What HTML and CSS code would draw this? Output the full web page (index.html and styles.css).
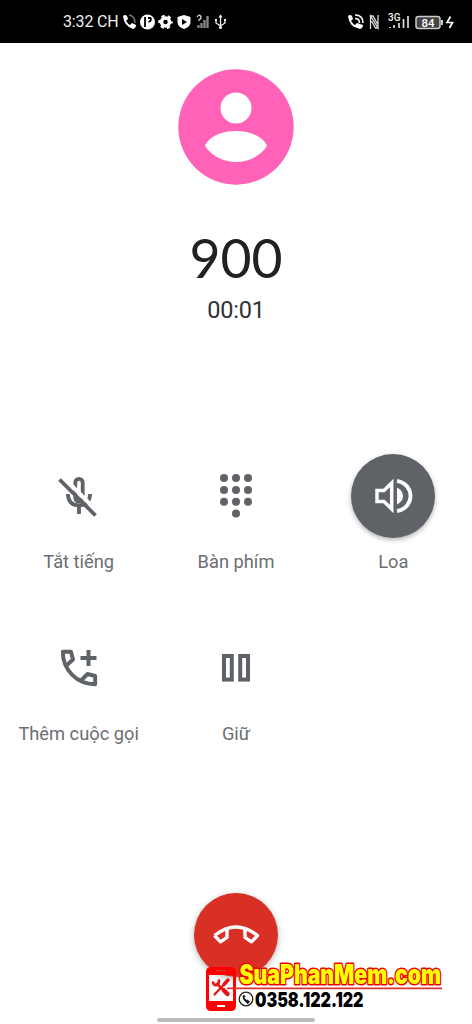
FILE: index.html
```html
<!DOCTYPE html>
<html lang="vi">
<head>
<meta charset="utf-8">
<title>900</title>
<link rel="stylesheet" href="styles.css">
</head>
<body>
<div class="screen">
  <header class="status">
    <div class="status-left">
      <span class="clock">3:32 CH</span>
      <svg class="status-icons" width="110" height="20" viewBox="0 0 110 20">
        <path d="M1 4q2-2 4 0l1 3-2 2q2 3 4 4l2-2 4 2q0 3-3 4Q2 14 1 4Z" fill="#fff"/>
        <path d="M7 3q6 1 6 8" fill="none" stroke="#777" stroke-width="1.3"/>
        <circle cx="25.500" cy="10" r="7.500" fill="#fff"/>
        <path d="M23 5v10M26 6h2.500q1.500 2.500-2 4" fill="none" stroke="#000" stroke-width="1.800"/>
        <circle cx="43.500" cy="10" r="4" fill="none" stroke="#fff" stroke-width="3.500"/>
        <circle cx="43.500" cy="10" r="6" fill="none" stroke="#fff" stroke-width="2.400" stroke-dasharray="3.140 3.140" stroke-dashoffset="1.570"/>
        <path d="M62 3l6.500 2v5q0 5-6.500 7-6.500-2-6.500-7V5Z" fill="#fff"/>
        <path d="M60 7l5 3-5 3Z" fill="#000"/>
        <path d="M76.500 16v-3M79.500 16v-5M82.500 16V8M85.500 16V4" stroke="#888" stroke-width="2.300"/>
        <path d="M75 5q2-3 3.500-1t-1.500 4v1" fill="none" stroke="#ddd" stroke-width="1.300"/>
        <path d="M98.500 3v13M94 8v3l4.500 3 4.500-3V8" fill="none" stroke="#eee" stroke-width="1.300"/>
        <path d="M96.500 5.500l2-3 2 3Z" fill="#eee"/>
        <circle cx="98.500" cy="15.500" r="1.600" fill="#eee"/>
        <path d="M93 7h2v2h-2ZM102 7h2v2h-2Z" fill="#eee"/>
      </svg>
    </div>
    <svg class="status-icons" width="110" height="20" viewBox="0 0 110 20">
      <path d="M0 4q2-2 4 0l1 3-2 2q2 3 4 4l2-2 6 2q0 3-3 4Q1 15 0 4Z" fill="#fff"/>
      <path d="M7 3q8 0 8 8M7 6.500q4.500 0 4.500 4.500" fill="none" stroke="#fff" stroke-width="1.600"/>
      <path d="M22.500 17V4l7.500 12V3M22.500 4l2.500 0 4.500 8M30 16h-2.500l-4-7" fill="none" stroke="#ddd" stroke-width="1.300"/>
      <text class="net" x="40" y="9">3G</text>
      <path d="M42 16v-1M46 16v-3M51 16v-5M55.500 16V7M60 16V4" stroke="#ddd" stroke-width="1.700"/>
      <rect x="68" y="4.500" width="24" height="12" rx="2.500" fill="#444" stroke="#ccc" stroke-width="1.500"/>
      <path d="M94 8v5" stroke="#ccc" stroke-width="2"/>
      <text class="battery" x="73.500" y="14.500">84</text>
      <path d="M102.500 4.500l-3.500 6h5.500l-3 5.500" fill="none" stroke="#fff" stroke-width="1.700"/>
    </svg>
  </header>

  <section class="caller">
    <svg class="avatar" width="116" height="116" viewBox="0 0 116 116">
      <circle cx="58" cy="58" r="57.700" fill="#ff62b7"/>
      <circle cx="58" cy="39" r="15.500" fill="#fff"/>
      <path d="M28 74.500C35 65 47 62 58 62s23 3 30 12.500q1.500 2 0 4C81 88 69 93 58 93S35 88 28 78.500q-1.500-2 0-4Z" fill="#fff"/>
    </svg>
    <h1 class="number">900</h1>
    <p class="timer">00:01</p>
  </section>

  <section class="actions">
    <div class="action">
      <div class="knob">
        <svg width="48" height="48" viewBox="0 0 48 48">
          <g fill="none" stroke="#5f6368" stroke-width="3.800">
            <path d="M20.300 26V10.500a3.700 3.700 0 0 1 7.400 0V26a3.700 3.700 0 0 1-7.400 0Z"/>
            <path d="M12.800 22q.7 11.500 11.200 11.500T35.200 22M24 33v9"/>
            <path d="M8 5l36 36" stroke="#fff" stroke-width="4"/>
            <path d="M4.500 7.500l36 36"/>
          </g>
        </svg>
      </div>
      <span class="label">Tắt tiếng</span>
    </div>
    <div class="action">
      <div class="knob">
        <svg width="48" height="48" viewBox="0 0 48 48" fill="#5f6368">
          <circle cx="12" cy="6" r="4"/><circle cx="24" cy="6" r="4"/><circle cx="36" cy="6" r="4"/>
          <circle cx="12" cy="18" r="4"/><circle cx="24" cy="18" r="4"/><circle cx="36" cy="18" r="4"/>
          <circle cx="12" cy="29.700" r="4"/><circle cx="24" cy="29.700" r="4"/><circle cx="36" cy="29.700" r="4"/>
          <circle cx="24" cy="41.500" r="4"/>
        </svg>
      </div>
      <span class="label">Bàn phím</span>
    </div>
    <div class="action">
      <div class="knob knob-on">
        <svg width="48" height="48" viewBox="0 0 48 48">
          <path d="M8 18.500h7L22.700 11v26L15 29.500H8Z" fill="none" stroke="#fff" stroke-width="3.500"/>
          <path d="M28 15.500q6 3 6 8.500t-6 8.500Z" fill="#fff"/>
          <path d="M28 8.800c18 3.500 18 26.900 0 30.400" fill="none" stroke="#fff" stroke-width="3.800"/>
        </svg>
      </div>
      <span class="label">Loa</span>
    </div>
    <div class="action">
      <div class="knob">
        <svg width="48" height="48" viewBox="0 0 48 48" fill="none" stroke="#5f6368" stroke-width="3.900" stroke-linejoin="round">
          <path d="M12 21l6-5.500-2-7.700H7.800C7.800 26 22 40.200 40.200 40.200V32l-7.700-2-6 6"/>
          <path d="M33.500 6v16M25.500 14h16" stroke-width="4"/>
        </svg>
      </div>
      <span class="label">Thêm cuộc gọi</span>
    </div>
    <div class="action">
      <div class="knob">
        <svg width="48" height="48" viewBox="0 0 48 48" fill="none" stroke="#5f6368" stroke-width="4">
          <rect x="12" y="12" width="7.800" height="23.600"/>
          <rect x="28.200" y="12" width="7.800" height="23.600"/>
        </svg>
      </div>
      <span class="label">Giữ</span>
    </div>
  </section>

  <footer class="footer">
    <div class="hangup">
      <svg width="52" height="52" viewBox="0 0 52 52" fill="none" stroke="#fff" stroke-width="3.400" stroke-linejoin="round">
        <path d="M4.500 26.500Q26 9.500 47.500 26.500l-6 6.300-6.500-4.500v-8.300M4.500 26.500l6 6.300 6.500-4.500v-8.300"/>
      </svg>
    </div>
    <div class="home-bar"></div>
  </footer>

  <svg class="watermark" width="256" height="64" viewBox="200 952 256 64">
    <path fill-rule="evenodd" fill="#f00" d="M211 967h20q5 0 5 5v34q0 5-5 5h-20q-5 0-5-5v-34q0-5 5-5ZM209 975v26h24v-26ZM217 1005v2h8v-2ZM216 970v1.500h10V970Z"/>
    <g fill="none" stroke="#e11" stroke-linecap="round">
      <path d="M217 984l7 6.500" stroke-width="2.600"/>
      <path d="M213 982.500q1 3 3.500 2.500t2.500-4.500" stroke-width="2.600"/>
      <path d="M224 990.500l3.500 3.500" stroke-width="4.500"/>
      <path d="M228 980l-4 4.500" stroke-width="3.400"/>
      <path d="M223 985.500l-8.500 9" stroke-width="2.200"/>
    </g>
    <path d="M227 988.300h215" stroke="#d33" stroke-width="1.700"/>
    <text class="site" x="239.500" y="983.500" textLength="201.500" lengthAdjust="spacingAndGlyphs">SuaPhanMem.com</text>
    <circle cx="246" cy="999" r="6.800" fill="#fff" stroke="#222" stroke-width="1.300"/>
    <path d="M243.500 995q-1.500 4 4 8.500l2-1.500-2-2-1.500.5-2-3 1-1Z" fill="#111" stroke="#111"/>
    <text class="hotline" x="255" y="1006.500" textLength="108.500" lengthAdjust="spacingAndGlyphs">0358.122.122</text>
  </svg>
</div>
</body>
</html>
```
FILE: styles.css
```css
* { box-sizing: border-box; }
body { margin: 0; background: #fff; font-family: Roboto, "Noto Sans", sans-serif; }
.screen {
  position: relative;
  width: 472px;
  height: 1024px;
  overflow: hidden;
  display: flex;
  flex-direction: column;
  background: #fff;
}
.status {
  height: 43px;
  flex: none;
  padding: 0 14px 0 63px;
  display: flex;
  align-items: center;
  justify-content: space-between;
  background: #000;
  color: #eee;
}
.status-left { display: flex; align-items: center; gap: 3px; }
.clock { width: 56px; font-size: 16px; letter-spacing: -0.15px; white-space: nowrap; }
.status-icons { display: block; }
.net { font: 500 10px Roboto, sans-serif; fill: #eee; }
.battery { font: 500 11.5px Roboto, sans-serif; fill: #fff; }
.caller {
  height: 411px;
  flex: none;
  padding-top: 26px;
  display: flex;
  flex-direction: column;
  align-items: center;
}
.avatar { display: block; }
.number {
  margin: 41px 0 0;
  font: 400 53.5px/62px Lato, sans-serif;
  color: #202124;
}
.timer {
  margin: 8px 0 0;
  font-size: 23.5px;
  line-height: 28px;
  letter-spacing: -0.2px;
  color: #303134;
}
.actions {
  display: grid;
  grid-template-columns: repeat(3, 1fr);
  grid-auto-rows: 172px;
}
.action { display: flex; flex-direction: column; align-items: center; gap: 12px; }
.knob {
  width: 84px;
  height: 84px;
  border-radius: 50%;
  display: flex;
  align-items: center;
  justify-content: center;
}
.knob-on { background: #5f6368; box-shadow: 0 2px 5px rgba(0, 0, 0, 0.3); }
.label { font-size: 18.3px; line-height: 24px; color: #6b6e72; white-space: nowrap; }
.footer {
  flex: 1;
  padding: 95px 0 2px;
  display: flex;
  flex-direction: column;
  align-items: center;
  justify-content: space-between;
}
.hangup {
  width: 84px;
  height: 84px;
  border-radius: 50%;
  display: flex;
  align-items: center;
  justify-content: center;
  background: #d93025;
  box-shadow: 0 2px 6px rgba(0, 0, 0, 0.3);
}
.home-bar { width: 158px; height: 4px; border-radius: 2px; background: #bcbcbc; }
.watermark { position: absolute; left: 200px; top: 952px; overflow: visible; }
.site {
  font: 900 27px Inter, sans-serif;
  fill: #ff0;
  stroke: #e00;
  stroke-width: 3px;
  paint-order: stroke;
  stroke-linejoin: round;
}
.hotline { font: 900 20px Inter, sans-serif; fill: #000; }
```
